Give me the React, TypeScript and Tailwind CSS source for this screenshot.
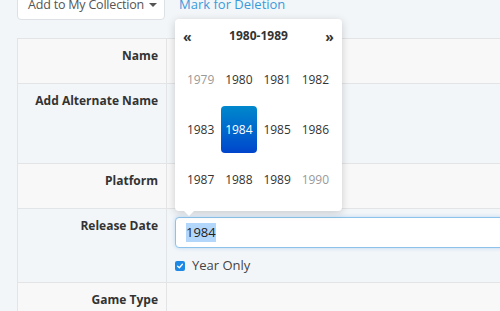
import React from "react";

const decade = [
  { y: 1979, muted: true },
  { y: 1980 },
  { y: 1981 },
  { y: 1982 },
  { y: 1983 },
  { y: 1984, active: true },
  { y: 1985 },
  { y: 1986 },
  { y: 1987 },
  { y: 1988 },
  { y: 1989 },
  { y: 1990, muted: true },
];

type RowProps = {
  label: string;
  height: string;
  striped?: boolean;
  children?: React.ReactNode;
};

const Row: React.FC<RowProps> = ({ label, height, striped, children }) => {
  return (
    <div
      className={`flex border-b border-[#e2e4e6] ${height} ${
        striped ? "bg-[#f8f8f8]" : ""
      }`}
    >
      <div className="w-[149px] shrink-0 border-r border-[#e2e4e6] pr-[8px] pt-[8px] text-right text-[12px] leading-[18px] font-bold text-[#333]">
        {label}
      </div>
      <div className="relative flex-1 px-[8px]">{children}</div>
    </div>
  );
};

const YearPicker = () => {
  return (
    <div className="absolute left-[175px] top-[19px] z-10 h-[192px] w-[167px] rounded-[4px] bg-white px-[8px] pt-[4px] shadow-[0_2px_8px_rgba(0,0,0,0.18)]">
      <div className="flex h-[26px] items-center justify-between text-[12px] font-bold text-[#333]">
        <span className="w-[20px] text-[14px]">«</span>
        <span>1980-1989</span>
        <span className="w-[20px] text-right text-[14px]">»</span>
      </div>
      <div className="mt-[7px] grid w-[150px] grid-cols-4 gap-x-[3px] gap-y-[3px]">
        {decade.map((d) => (
          <div
            key={d.y}
            className={`flex h-[47px] items-center justify-center rounded-[4px] text-[12px] ${
              d.active
                ? "bg-gradient-to-b from-[#0088cc] to-[#0044cc] text-white"
                : d.muted
                ? "text-[#999]"
                : "text-[#333]"
            }`}
          >
            {d.y}
          </div>
        ))}
      </div>
      <div className="absolute -bottom-[5px] left-[8px] h-0 w-0 border-x-[6px] border-t-[6px] border-x-transparent border-t-white" />
    </div>
  );
};

export default function App() {
  return (
    <div
      className="relative h-[311px] w-[500px] overflow-hidden bg-[#f3f6f9] px-[17px]"
      style={{ fontFamily: '"Open Sans", "Liberation Sans", sans-serif' }}
    >
      <div className="-mt-[10px] flex items-center gap-[14px]">
        <button className="flex h-[30px] w-[148px] items-center gap-[5px] whitespace-nowrap rounded-[4px] border border-[#dde1e5] bg-white pl-[10px] pr-[6px] text-[12.5px] tracking-[-0.2px] text-[#555]">
          Add to My Collection
          <span className="h-0 w-0 border-x-[4px] border-t-[4px] border-x-transparent border-t-[#555]" />
        </button>
        <a className="whitespace-nowrap text-[13px] text-[#3b9ad9]">
          Mark for Deletion
        </a>
      </div>

      <div className="mt-[18px] w-[520px] border-l border-t border-[#e2e4e6]">
        <Row label="Name" height="h-[45px]" striped />
        <Row label="Add Alternate Name" height="h-[80px]" />
        <Row label="Platform" height="h-[45px]" striped />
        <Row label="Release Date" height="h-[74px]">
          <div className="mt-[8px] flex h-[31px] items-center rounded-[4px] border border-[#8dc3ea] bg-white px-[10px] shadow-[0_0_4px_rgba(102,175,233,0.4)]">
            <span className="bg-[#b3d7fb] text-[13px] text-[#222]">1984</span>
          </div>
          <div className="mt-[8px] flex items-center gap-[7px] text-[13px] text-[#444]">
            <span className="flex h-[10px] w-[10px] items-center justify-center rounded-[2px] bg-[#1e88e5]">
              <svg viewBox="0 0 10 10" className="h-[8px] w-[8px]">
                <path
                  d="M2 5.2 L4.2 7.2 L8 2.8"
                  fill="none"
                  stroke="white"
                  strokeWidth="1.6"
                  strokeLinecap="round"
                  strokeLinejoin="round"
                />
              </svg>
            </span>
            Year Only
          </div>
        </Row>
        <Row label="Game Type" height="h-[45px]" striped />
      </div>

      <YearPicker />
    </div>
  );
}
